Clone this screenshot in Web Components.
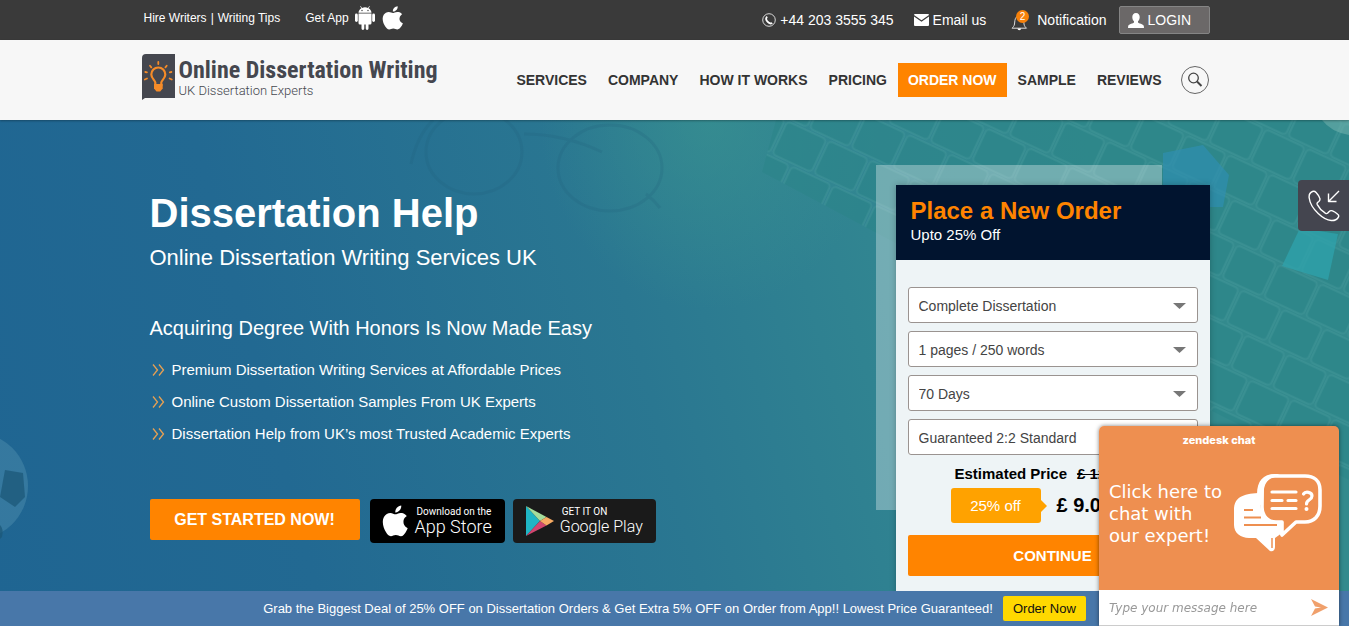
<!DOCTYPE html>
<html lang="en">
<head>
<meta charset="utf-8">
<meta name="viewport" content="width=device-width, initial-scale=1">
<title>Dissertation Help - Online Dissertation Writing</title>
<style>
    body {
        margin: 0;
        font-family: "Liberation Sans", Arial, sans-serif;
        color: #333;
        --orange: #ff8400;
        --wrap: 1070px;
    }
</style>
</head>
<body>
<top-bar></top-bar>
<site-header>
    <site-logo slot="logo"></site-logo>
    <nav-link slot="nav" href="#services">SERVICES</nav-link>
    <nav-link slot="nav" href="#company">COMPANY</nav-link>
    <nav-link slot="nav" href="#how">HOW IT WORKS</nav-link>
    <nav-link slot="nav" href="#pricing">PRICING</nav-link>
    <nav-link slot="nav" href="#order" active>ORDER NOW</nav-link>
    <nav-link slot="nav" href="#sample">SAMPLE</nav-link>
    <nav-link slot="nav" href="#reviews">REVIEWS</nav-link>
</site-header>
<hero-banner>
    <hero-intro></hero-intro>
    <order-form slot="aside"></order-form>
</hero-banner>
<promo-bar>Grab the Biggest Deal of 25% OFF on Dissertation Orders &amp; Get Extra 5% OFF on Order from App!! Lowest Price Guaranteed!</promo-bar>
<call-tab></call-tab>
<chat-widget></chat-widget>

<script>
const applePath = 'M15.8 12.1c0-2.6 2.1-3.8 2.2-3.9-1.2-1.8-3.1-2-3.7-2-1.6-.2-3.1.9-3.9.9-.8 0-2-.9-3.3-.9-1.7 0-3.3 1-4.2 2.5-1.8 3.1-.5 7.7 1.3 10.2.8 1.2 1.8 2.6 3.2 2.6 1.3-.1 1.8-.8 3.3-.8 1.6 0 2 .8 3.4.8s2.3-1.3 3.1-2.5c1-1.4 1.4-2.8 1.4-2.9 0 0-2.8-1.1-2.8-4zM13.3 4.500c.7-.8 1.200-2 1-3.200-1 .1-2.200.7-2.900 1.500-.6.700-1.200 1.900-1 3.100 1.100.1 2.200-.6 2.900-1.400z';

class TopBar extends HTMLElement {
    constructor() {
        super();
        this.attachShadow({ mode: 'open' });
    }

    connectedCallback() {
        this.shadowRoot.innerHTML = `
            <style>
                :host {
                    display: block;
                    background: #3a3a3a;
                    color: #fff;
                }
                .wrap {
                    max-width: var(--wrap);
                    margin: 0 auto;
                    height: 40px;
                    display: flex;
                    align-items: center;
                    justify-content: space-between;
                }
                a {
                    color: inherit;
                    text-decoration: none;
                }
                svg {
                    display: block;
                }
                .left {
                    display: flex;
                    align-items: center;
                    font-size: 12px;
                    padding-left: 4px;
                    padding-bottom: 4px;
                }
                .sep {
                    margin: 0 4px;
                }
                .app {
                    margin: 0 6px 0 25px;
                }
                .store + .store {
                    margin-left: 7px;
                }
                .right {
                    display: flex;
                    align-items: center;
                    font-size: 14px;
                }
                .item {
                    display: flex;
                    align-items: center;
                    gap: 4px;
                }
                .mail {
                    margin-left: 20px;
                }
                .bell {
                    margin-left: 25px;
                    gap: 8px;
                }
                .login {
                    margin-left: 12px;
                    box-sizing: border-box;
                    width: 91px;
                    height: 28px;
                    padding: 0 8px;
                    border: 1px solid #858585;
                    border-radius: 2px;
                    background: #6b6868;
                    color: #fff;
                    font: inherit;
                }
            </style>
            <div class="wrap">
                <div class="left">
                    <a href="#hire">Hire Writers</a><span class="sep">|</span><a href="#tips">Writing Tips</a>
                    <span class="app">Get App</span>
                    <a class="store" href="#android" aria-label="Android app">
                        <svg width="20" height="24" viewBox="0 0 20 24" fill="#fff">
                            <path d="M3.500 7.500h13V17a1.500 1.500 0 0 1-1.500 1.500h-1.500v4a1.400 1.400 0 0 1-2.800 0v-4H9.300v4a1.400 1.400 0 0 1-2.800 0v-4H5A1.500 1.500 0 0 1 3.500 17z"/>
                            <path d="M3.500 6.800c0-2 1.200-3.700 2.900-4.600L5.200.4l.5-.3 1.300 1.800a8 8 0 0 1 6 0L14.300.1l.5.3-1.200 1.800c1.700.9 2.900 2.600 2.900 4.600z"/>
                            <rect x="0" y="7.600" width="2.800" height="8.400" rx="1.400"/>
                            <rect x="17.200" y="7.600" width="2.800" height="8.400" rx="1.400"/>
                            <circle cx="7" cy="4.500" r=".7" fill="#3a3a3a"/>
                            <circle cx="13" cy="4.500" r=".7" fill="#3a3a3a"/>
                        </svg>
                    </a>
                    <a class="store" href="#ios" aria-label="iPhone app">
                        <svg width="22" height="24" viewBox="1.500 1 18 21" preserveAspectRatio="none" fill="#fff"><path d="${applePath}"/></svg>
                    </a>
                </div>
                <div class="right">
                    <a class="item" href="tel:+442033555345">
                        <svg width="14" height="14" viewBox="0 0 14 14" fill="none" stroke="#fff">
                            <circle cx="7" cy="7" r="6.300" stroke-width=".8"/>
                            <path d="M5.200 3.600C3.600 5 4.300 7.300 5.500 8.700s3.200 2.300 4.700 1.200" stroke-width="1.800"/>
                        </svg>
                        +44 203 3555 345
                    </a>
                    <a class="item mail" href="#email">
                        <svg width="15" height="12" viewBox="0 0 15 12" fill="#fff">
                            <path d="M1 0h13a1 1 0 0 1 1 1L7.500 6.200 0 1a1 1 0 0 1 1-1z"/>
                            <path d="M0 2.600l7.500 5.200L15 2.600V11a1 1 0 0 1-1 1H1a1 1 0 0 1-1-1z"/>
                        </svg>
                        Email us
                    </a>
                    <a class="item bell" href="#notification">
                        <svg width="18" height="21" viewBox="0 0 18 21">
                            <path d="M1 18.200h14.500c-1-1-2.300-2.200-2.500-4.200l-.3-3.500C12.300 7.500 10.500 6 8.300 6S4.200 7.500 3.900 10.500L3.500 14c-.2 2-1.500 3.200-2.500 4.200z" fill="none" stroke="#ddd"/>
                            <path d="M6.500 18.500a1.800 1.800 0 0 0 3.600 0z" fill="#fff"/>
                            <circle cx="11.500" cy="6.500" r="6.500" fill="#f7810a"/>
                            <text x="11.500" y="10" text-anchor="middle" font-size="10" fill="#fff">2</text>
                        </svg>
                        Notification
                    </a>
                    <button class="item login" type="button">
                        <svg width="16" height="15" viewBox="0 0 16 15" fill="#fff">
                            <path d="M8 0c2.400 0 3.700 1.700 3.700 4 0 1.700-.6 3.300-1.700 4.200v1.300c.5.900 5.300 1.500 5.800 3.500l.2 2H0l.2-2c.5-2 5.300-2.600 5.800-3.500V8.200C4.900 7.300 4.300 5.700 4.300 4 4.300 1.700 5.600 0 8 0z"/>
                        </svg>
                        LOGIN
                    </button>
                </div>
            </div>
        `;
    }
}

class SiteLogo extends HTMLElement {
    constructor() {
        super();
        this.attachShadow({ mode: 'open' });
    }

    connectedCallback() {
        this.shadowRoot.innerHTML = `
            <style>
                :host {
                    display: block;
                }
                a {
                    display: flex;
                    align-items: center;
                    gap: 4px;
                    color: #45474f;
                    text-decoration: none;
                    white-space: nowrap;
                }
                .name {
                    display: block;
                    font: bold 24px/28px "Liberation Sans Narrow", "Roboto Condensed", "Liberation Sans", sans-serif;
                }
                .tag {
                    display: block;
                    font: 300 13px/14px Roboto, sans-serif;
                }
            </style>
            <a href="#home">
                <svg width="33" height="46" viewBox="0 0 33 46">
                    <path d="M4 0h29v44H3l-3 2V4a4 4 0 0 1 4-4z" fill="#45474f"/>
                    <g fill="none" stroke="#f58b28" stroke-width="2.200" stroke-linecap="round">
                        <path d="M13.300 31v-2.500c0-2-4-4-4-8a7 7 0 0 1 14 0c0 4-4 6-4 8V31z"/>
                        <path d="M16.300 8v2M8 11.800l1.300 1.600M24.700 11.800l-1.300 1.600M2.800 25.500l2.200-1M29.800 25.500l-2.200-1M3.300 18l1.600.3M29.400 18l-1.600.3" stroke-width="1.800"/>
                    </g>
                    <path d="M12 30h8.700v4.500l-2.500 3h-3.700L12 34.500z" fill="#f58b28"/>
                </svg>
                <span>
                    <span class="name">Online Dissertation Writing</span>
                    <span class="tag">UK Dissertation Experts</span>
                </span>
            </a>
        `;
    }
}

class NavLink extends HTMLElement {
    constructor() {
        super();
        this.attachShadow({ mode: 'open' });
    }

    connectedCallback() {
        this.shadowRoot.innerHTML = `
            <style>
                :host {
                    display: block;
                }
                a {
                    display: block;
                    padding: 0 10px;
                    color: #333;
                    font-size: 14px;
                    font-weight: bold;
                    line-height: 34px;
                    text-decoration: none;
                    white-space: nowrap;
                }
                :host([active]) a {
                    background: var(--orange);
                    color: #fff;
                }
            </style>
            <a href="${this.getAttribute('href')}"><slot></slot></a>
        `;
    }
}

class SiteHeader extends HTMLElement {
    constructor() {
        super();
        this.attachShadow({ mode: 'open' });
    }

    connectedCallback() {
        this.shadowRoot.innerHTML = `
            <style>
                :host {
                    display: block;
                    position: relative;
                    z-index: 1;
                    background: #f7f7f7;
                    box-shadow: 0 1px 2px rgba(0, 0, 0, 0.3);
                }
                .wrap {
                    box-sizing: border-box;
                    max-width: var(--wrap);
                    height: 80px;
                    margin: 0 auto;
                    padding: 0 1px 0 2px;
                    display: flex;
                    align-items: center;
                    justify-content: space-between;
                }
                slot[name="logo"] {
                    display: block;
                    padding-bottom: 6px;
                }
                nav {
                    display: flex;
                    align-items: center;
                    gap: 1px;
                }
                button {
                    display: grid;
                    place-items: center;
                    width: 28px;
                    height: 28px;
                    margin-left: 8px;
                    padding: 0;
                    border: 1px solid #666;
                    border-radius: 50%;
                    background: none;
                }
            </style>
            <div class="wrap">
                <slot name="logo"></slot>
                <nav>
                    <slot name="nav"></slot>
                    <button type="button" aria-label="Search">
                        <svg width="16" height="16" viewBox="0 0 16 16" fill="none" stroke="#444">
                            <circle cx="6.500" cy="6" r="4.800" stroke-width="1.300"/>
                            <path d="M10 9.500l4.500 4.500" stroke-width="2"/>
                        </svg>
                    </button>
                </nav>
            </div>
        `;
    }
}

class HeroBanner extends HTMLElement {
    constructor() {
        super();
        this.attachShadow({ mode: 'open' });
    }

    connectedCallback() {
        this.shadowRoot.innerHTML = `
            <style>
                :host {
                    display: block;
                    position: relative;
                    min-height: calc(100vh - 120px);
                    background: linear-gradient(75deg, #1f6592 0%, #226992 22%, #2a7791 48%, #328791 68%, #338a8d 82%);
                    overflow: hidden;
                }
                .scene {
                    position: absolute;
                    inset: 0;
                    width: 100%;
                    height: 100%;
                }
                .wrap {
                    position: relative;
                    box-sizing: border-box;
                    max-width: var(--wrap);
                    margin: 0 auto;
                    padding: 45px 0 20px 10px;
                    display: flex;
                    justify-content: space-between;
                    align-items: flex-start;
                }
            </style>
            <svg class="scene" viewBox="0 0 1349 506" preserveAspectRatio="xMidYMin slice" aria-hidden="true">
                <defs>
                    <pattern id="keys" width="46" height="78" patternUnits="userSpaceOnUse" patternTransform="translate(787 0) rotate(25)">
                        <g fill="#2a8388" fill-opacity=".5" stroke="#5aaaa8" stroke-opacity=".2" stroke-width="2">
                            <rect x="1" y="1" width="43" height="36" rx="4"/>
                            <rect x="-22" y="40" width="43" height="36" rx="4"/>
                            <rect x="24" y="40" width="43" height="36" rx="4"/>
                        </g>
                    </pattern>
                    <radialGradient id="glow">
                        <stop offset="0" stop-color="#3a9490"/>
                        <stop offset="1" stop-color="#3a9490" stop-opacity="0"/>
                    </radialGradient>
                </defs>
                <ellipse cx="710" cy="0" rx="170" ry="190" fill="url(#glow)" opacity=".6"/>
                <path d="M776 0h573v360L1200 285 762 52z" fill="url(#keys)"/>
                <path d="M1163 33l40-8 26 30-6 32h-60z" fill="#2f8fb0" opacity=".7"/>
                <path d="M1300 108l38 6-10 46-46-14z" fill="#2fa3ac" opacity=".75"/>
                <path d="M1322 0h27v15q-18-3-27-15z" fill="#7ab8b2" opacity=".5"/>
                <g fill="none" stroke="#215f7a" stroke-width="3" opacity=".2">
                    <ellipse cx="474" cy="32" rx="48" ry="42"/>
                    <ellipse cx="610" cy="48" rx="52" ry="43"/>
                    <path d="M524 14q40 0 78 18M411 44q6-28 22-44M646 74q8 6 14 14"/>
                </g>
                <circle cx="-26" cy="366" r="54" fill="#4c8cac" opacity=".5"/>
                <path d="M5 350l18 3 2 24-10 10-15-10z" fill="#1c5878" opacity=".75"/>
                <path d="M0 405q4 4 2 12l-2 2z" fill="#1c5878" opacity=".75"/>
            </svg>
            <div class="wrap">
                <slot></slot>
                <slot name="aside"></slot>
            </div>
        `;
    }
}

class StoreBadge extends HTMLElement {
    constructor() {
        super();
        this.attachShadow({ mode: 'open' });
    }

    connectedCallback() {
        const google = this.getAttribute('store') === 'google';
        const icon = google
            ? `<svg width="28" height="30" viewBox="0 0 28 30">
                    <path d="M0 0l14 15L0 30z" fill="#1fb5c4"/>
                    <path d="M0 0l20.500 11L14 15z" fill="#a5dd9b"/>
                    <path d="M0 30l20.500-10.500L14 15z" fill="#d1466f"/>
                    <path d="M20.500 11l7.500 4-7.500 4.500L14 15z" fill="#f8ab63"/>
                </svg>`
            : `<svg width="27" height="32" viewBox="1.500 1 18 21" preserveAspectRatio="none" fill="#fff"><path d="${applePath}"/></svg>`;
        this.shadowRoot.innerHTML = `
            <style>
                :host {
                    display: block;
                }
                a {
                    box-sizing: border-box;
                    display: flex;
                    align-items: center;
                    gap: 6px;
                    height: 44px;
                    padding: 0 13px 0 ${google ? 13 : 12}px;
                    border-radius: 4px;
                    background: ${google ? '#1a1a1a' : '#000'};
                    color: #fff;
                    font-family: Roboto, sans-serif;
                    text-decoration: none;
                    white-space: nowrap;
                }
                small {
                    display: block;
                    padding-left: 2px;
                    font-size: 10px;
                    line-height: 12px;
                }
                b {
                    display: block;
                    font-size: ${google ? 16 : 18}px;
                    font-weight: 300;
                    line-height: 18px;
                }
            </style>
            <a href="#app">
                ${icon}
                <span><small>${this.getAttribute('small')}</small><b>${this.getAttribute('name')}</b></span>
            </a>
        `;
    }
}

class HeroIntro extends HTMLElement {
    constructor() {
        super();
        this.attachShadow({ mode: 'open' });
    }

    connectedCallback() {
        const points = [
            'Premium Dissertation Writing Services at Affordable Prices',
            'Online Custom Dissertation Samples From UK Experts',
            'Dissertation Help from UK’s most Trusted Academic Experts',
        ];
        this.shadowRoot.innerHTML = `
            <style>
                :host {
                    display: block;
                    color: #fff;
                }
                h1 {
                    margin: 25px 0 9px;
                    font-size: 40px;
                    line-height: 46px;
                }
                h2, h3 {
                    margin: 0;
                    font-weight: normal;
                }
                h2 {
                    font-size: 22px;
                    line-height: 26px;
                }
                h3 {
                    margin-top: 45px;
                    font-size: 20px;
                    line-height: 24px;
                }
                ul {
                    list-style: none;
                    margin: 14px 0 49px;
                    padding: 0 0 0 2px;
                    font-size: 15px;
                    line-height: 32px;
                }
                li {
                    display: flex;
                    align-items: center;
                    gap: 7px;
                }
                .actions {
                    display: flex;
                    align-items: flex-start;
                    gap: 8px;
                }
                button {
                    width: 210px;
                    height: 41px;
                    margin-right: 2px;
                    border: 0;
                    border-radius: 2px;
                    background: var(--orange);
                    color: #fff;
                    font: bold 16px "Liberation Sans", Arial, sans-serif;
                }
            </style>
            <h1>Dissertation Help</h1>
            <h2>Online Dissertation Writing Services UK</h2>
            <h3>Acquiring Degree With Honors Is Now Made Easy</h3>
            <ul>
                ${points.map(text => `
                    <li>
                        <svg width="13" height="12" viewBox="0 0 13 12" fill="none" stroke="#e8a052" stroke-width="1.300"><path d="M1 .5L5.500 6 1 11.500M7 .5L11.500 6 7 11.500"/></svg>
                        ${text}
                    </li>`).join('')}
            </ul>
            <div class="actions">
                <button type="button">GET STARTED NOW!</button>
                <store-badge store="apple" small="Download on the" name="App Store"></store-badge>
                <store-badge store="google" small="GET IT ON" name="Google Play"></store-badge>
            </div>
        `;
    }
}

class SelectField extends HTMLElement {
    constructor() {
        super();
        this.attachShadow({ mode: 'open' });
    }

    connectedCallback() {
        this.shadowRoot.innerHTML = `
            <style>
                :host {
                    display: block;
                }
                label {
                    display: block;
                    position: relative;
                }
                select {
                    appearance: none;
                    display: block;
                    box-sizing: border-box;
                    width: 100%;
                    height: 36px;
                    padding: 2px 30px 0 10px;
                    border: 1px solid #9a9390;
                    border-radius: 3px;
                    background: #fff;
                    color: #444;
                    font: 14px "Liberation Sans", Arial, sans-serif;
                }
                svg {
                    position: absolute;
                    right: 12px;
                    top: 16px;
                    pointer-events: none;
                }
            </style>
            <label>
                <select aria-label="${this.getAttribute('label')}"><option>${this.getAttribute('value')}</option></select>
                <svg width="13" height="6" viewBox="0 0 13 6" fill="#777"><path d="M0 0h13L6.500 6z"/></svg>
            </label>
        `;
    }
}

class OrderForm extends HTMLElement {
    constructor() {
        super();
        this.attachShadow({ mode: 'open' });
    }

    connectedCallback() {
        this.shadowRoot.innerHTML = `
            <style>
                :host {
                    display: block;
                    position: relative;
                    flex: none;
                    width: 334px;
                }
                .backdrop {
                    position: absolute;
                    inset: 0 48px auto 0;
                    height: 345px;
                    background: rgba(255, 255, 255, 0.32);
                }
                .card {
                    position: relative;
                    margin: 20px 0 0 20px;
                    background: #eef4f6;
                    box-shadow: 0 0 6px rgba(0, 0, 0, 0.25);
                }
                header {
                    padding: 12px 15px 15px;
                    background: #01142f;
                    color: #fff;
                    font-size: 15px;
                    line-height: 20px;
                }
                h2 {
                    margin: 0;
                    color: var(--orange);
                    font-size: 24px;
                    line-height: 28px;
                }
                form {
                    display: grid;
                    gap: 8px;
                    padding: 27px 12px 30px;
                }
                .prices {
                    padding: 2px 0 4px 43px;
                    color: #000;
                    font-weight: bold;
                }
                .estimate {
                    display: flex;
                    gap: 10px;
                    padding-left: 4px;
                    font-size: 15px;
                    line-height: 18px;
                }
                .now {
                    display: flex;
                    align-items: center;
                    gap: 16px;
                    margin-top: 5px;
                    font-size: 20px;
                }
                .off {
                    position: relative;
                    width: 90px;
                    border-radius: 3px;
                    background: #ffa200;
                    color: #fff;
                    font-size: 15px;
                    font-weight: normal;
                    line-height: 35px;
                    text-align: center;
                }
                .off::after {
                    content: "";
                    position: absolute;
                    left: 100%;
                    top: 12px;
                    border: 6px solid transparent;
                    border-left-color: #ffa200;
                    border-right: 0;
                }
                button {
                    height: 41px;
                    border: 0;
                    border-radius: 2px;
                    background: var(--orange);
                    color: #fff;
                    font: bold 15px "Liberation Sans", Arial, sans-serif;
                }
            </style>
            <div class="backdrop"></div>
            <div class="card">
                <header>
                    <h2>Place a New Order</h2>
                    Upto 25% Off
                </header>
                <form>
                    <select-field label="Service" value="Complete Dissertation"></select-field>
                    <select-field label="Pages" value="1 pages / 250 words"></select-field>
                    <select-field label="Deadline" value="70 Days"></select-field>
                    <select-field label="Standard" value="Guaranteed 2:2 Standard"></select-field>
                    <div class="prices">
                        <div class="estimate"><span>Estimated Price</span><s>£ 12.00</s></div>
                        <div class="now"><span class="off">25% off</span><span>£ 9.00</span></div>
                    </div>
                    <button type="button">CONTINUE</button>
                </form>
            </div>
        `;
    }
}

class PromoBar extends HTMLElement {
    constructor() {
        super();
        this.attachShadow({ mode: 'open' });
    }

    connectedCallback() {
        this.shadowRoot.innerHTML = `
            <style>
                :host {
                    position: fixed;
                    inset: auto 0 0;
                    z-index: 2;
                    display: flex;
                    align-items: center;
                    justify-content: center;
                    gap: 10px;
                    height: 35px;
                    background: #4877a9;
                    color: #fff;
                    font-size: 13px;
                }
                a {
                    padding: 0 10px;
                    border-radius: 2px;
                    background: #ffd800;
                    color: #111;
                    line-height: 25px;
                    text-decoration: none;
                }
            </style>
            <span><slot></slot></span>
            <a href="#order">Order Now</a>
        `;
    }
}

class CallTab extends HTMLElement {
    constructor() {
        super();
        this.attachShadow({ mode: 'open' });
    }

    connectedCallback() {
        this.shadowRoot.innerHTML = `
            <style>
                :host {
                    position: fixed;
                    right: 0;
                    top: 180px;
                    z-index: 2;
                    display: block;
                }
                button {
                    display: grid;
                    place-items: center;
                    width: 51px;
                    height: 51px;
                    padding: 0;
                    border: 0;
                    border-radius: 4px 0 0 4px;
                    background: #44454f;
                }
            </style>
            <button type="button" aria-label="Request a call">
                <svg width="32" height="32" viewBox="0 0 32 32" fill="none" stroke="#fff" stroke-width="1.400" stroke-linejoin="round">
                    <path d="M4.500 1.500C2 2.500.8 5 1.200 8c.7 5.500 4.200 11 9 15.500 4 3.800 8.500 6.700 13 7 3 .2 5.600-.8 7-3 .7-1.200.6-2.500-.5-3.300-1.700-1.500-3.500-2.600-5.200-3.300-1.500-.6-2.500-.3-3.500.8l-1.500 1.600c-.6.500-1.300.4-2.200-.1-3.200-2-6.300-5.300-8-8.600-.4-.9-.4-1.500.3-2.100l1.200-1c1.100-1 1.500-2.100.9-3.500-.8-2-2-3.800-3.600-5.500-1-1.100-2.300-1.500-3.600-1z"/>
                    <path d="M31 1L20.500 11.500M20.500 3.500v8h8"/>
                </svg>
            </button>
        `;
    }
}

class ChatWidget extends HTMLElement {
    constructor() {
        super();
        this.attachShadow({ mode: 'open' });
    }

    connectedCallback() {
        this.shadowRoot.innerHTML = `
            <style>
                :host {
                    position: fixed;
                    right: 10px;
                    bottom: 0;
                    z-index: 3;
                    display: block;
                    width: 240px;
                    font-family: "DejaVu Sans", Verdana, sans-serif;
                    border-radius: 5px 5px 0 0;
                    overflow: hidden;
                    box-shadow: 0 0 4px rgba(0, 0, 0, 0.5);
                }
                .panel {
                    padding: 6px 10px 36px;
                    background: #ee8f50;
                    color: #fff;
                }
                .brand {
                    font: 800 11px/16px Inter, Lato, sans-serif;
                    text-align: center;
                }
                .pitch {
                    display: flex;
                    align-items: center;
                    justify-content: space-between;
                    margin-top: 26px;
                    padding-right: 6px;
                }
                p {
                    margin: 0;
                    font-size: 18px;
                    line-height: 22px;
                    white-space: nowrap;
                }
                form {
                    display: flex;
                    align-items: center;
                    height: 35px;
                    padding: 0 11px 0 10px;
                    background: #fff;
                    border-bottom: 1px solid #ccc;
                }
                input {
                    flex: 1;
                    min-width: 0;
                    padding: 0;
                    border: 0;
                    outline: 0;
                    font: italic 12px "DejaVu Sans", Verdana, sans-serif;
                }
                input::placeholder {
                    color: #999;
                }
                button {
                    padding: 0;
                    border: 0;
                    background: none;
                }
                svg {
                    display: block;
                }
            </style>
            <div class="panel">
                <div class="brand">zendesk chat</div>
                <div class="pitch">
                    <p>Click here to<br>chat with<br>our expert!</p>
                    <svg width="90" height="80" viewBox="0 0 90 80">
                        <path d="M25 19C10 20 1 23 1 36v15c0 8 7 13 15 13h7l14 13c3 1 5-1 5-4V64l7-5V45L28 35z" fill="#fff"/>
                        <path d="M39 64v10" stroke="#ee8f50" stroke-width="1.500"/>
                        <path d="M11 36h9M11 43.500h17M11 51h33" stroke="#ee8f50" stroke-width="2"/>
                        <path d="M49 61V48h-4" stroke="#fff" stroke-width="4" fill="none"/>
                        <path d="M42 2h30c9 0 15 5 15 14v16c0 10-6 16-15 16h-9L49 61V48h-6c-8 0-14-6-14-15V16C29 8 34 2 42 2z" fill="#ee8f50" stroke="#fff" stroke-width="3.600" stroke-linejoin="round"/>
                        <path d="M24 20C24 7 30 0 42 0h5c-9 3-15 7-16 15l-1 18c-5-3-6-8-6-13z" fill="#fff"/>
                        <g fill="none" stroke="#fff" stroke-width="3.200" stroke-linecap="round">
                            <path d="M39 18h24M39 26.500h10M55 26.500h8M39 34.500h24"/>
                            <path d="M70.500 20c2-3 8.500-2 8.500 2 0 4-5.500 3.500-5.500 8"/>
                        </g>
                        <circle cx="73.500" cy="35" r="2" fill="#fff"/>
                    </svg>
                </div>
            </div>
            <form>
                <input type="text" placeholder="Type your message here" aria-label="Message">
                <button type="button" aria-label="Send">
                    <svg width="17" height="17" viewBox="0 0 17 17" fill="#f0a06c"><path d="M0 0l17 8.500L0 17l4-7.500 6-1-6-1z"/></svg>
                </button>
            </form>
        `;
    }
}

customElements.define('top-bar', TopBar);
customElements.define('site-logo', SiteLogo);
customElements.define('nav-link', NavLink);
customElements.define('site-header', SiteHeader);
customElements.define('hero-banner', HeroBanner);
customElements.define('store-badge', StoreBadge);
customElements.define('hero-intro', HeroIntro);
customElements.define('select-field', SelectField);
customElements.define('order-form', OrderForm);
customElements.define('promo-bar', PromoBar);
customElements.define('call-tab', CallTab);
customElements.define('chat-widget', ChatWidget);
</script>
</body>
</html>
